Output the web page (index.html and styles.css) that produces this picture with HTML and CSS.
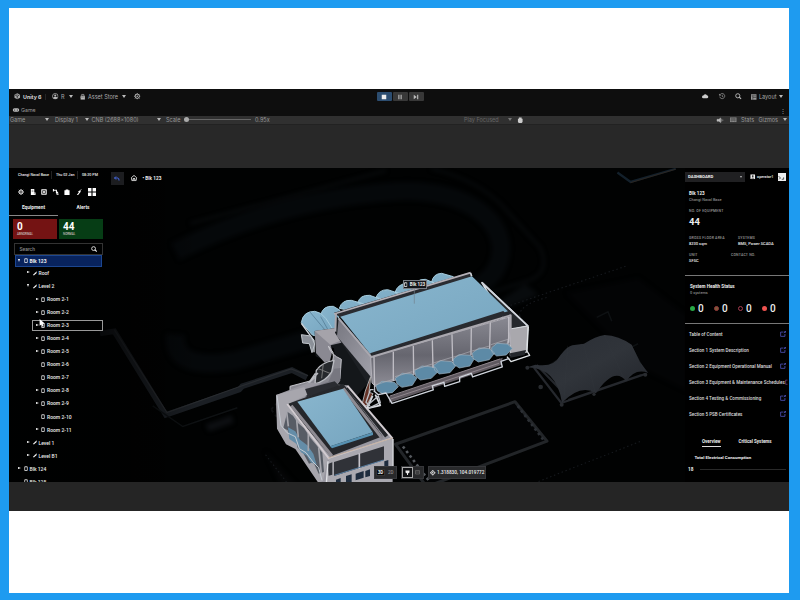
FILE: index.html
```html
<!DOCTYPE html>
<html lang="en">
<head>
<meta charset="utf-8">
<title>Unity 6 - Blk 123</title>
<link rel="stylesheet" href="styles.css">
</head>
<body>
<svg width="0" height="0" class="defs">
  <defs>
    <symbol id="room" viewBox="0 0 10 14"><rect x="1.5" y="2.5" width="7" height="10" fill="none" stroke="currentColor" stroke-width="2"/><path d="M3 1h4M3 13.500h4" stroke="currentColor" stroke-width="1.500"/></symbol>
    <symbol id="level" viewBox="0 0 12 12"><path d="M0 9.500 8 2 11 0l1 1-2 4-6.500 6.500H0z" fill="currentColor"/></symbol>
    <symbol id="gear" viewBox="0 0 14 14"><circle cx="7" cy="7" r="4.600" fill="none" stroke="currentColor" stroke-width="2"/><circle cx="7" cy="7" r="1.700" fill="currentColor"/><path d="M7 0v3M7 11v3M0 7h3M11 7h3M2 2l2 2M10 10l2 2M12 2l-2 2M4 10l-2 2" stroke="currentColor" stroke-width="1.500"/></symbol>
    <symbol id="search" viewBox="0 0 14 14"><circle cx="6" cy="6" r="4.500" fill="none" stroke="currentColor" stroke-width="2"/><path d="m9 9 4.500 4" stroke="currentColor" stroke-width="2.500"/></symbol>
    <symbol id="open" viewBox="0 0 14 14"><path d="M8 2.500H1.500v10h10V7M9 5l4-4M10 1h3v3" fill="none" stroke="currentColor" stroke-width="1.800"/></symbol>
    <symbol id="user" viewBox="0 0 14 14"><circle cx="7" cy="7" r="6" fill="none" stroke="currentColor" stroke-width="1.500"/><circle cx="7" cy="5.200" r="2.200" fill="currentColor"/><path d="M2.500 11c1-4 8-4 9 0-2 2.500-7 2.500-9 0" fill="currentColor"/></symbol>
  </defs>
</svg>
<main class="page">
  <section class="editor">
    <header class="topbar">
      <div class="main-tools">
        <svg class="ico7" viewBox="0 0 14 14"><path d="m7 .5 6 3.300v6.500L7 13.500 1 10.300V3.800z" fill="#aaa"/><path d="M7 7v5M7 7 2.500 4.500M7 7l4.500-2.500" stroke="#111" stroke-width="1.500"/><path d="M4 1.500 7 4l3-2.500" stroke="#333" fill="none"/></svg>
        <b>Unity 6</b><i class="vsep"></i>
        <svg class="ico7"><use href="#user"/></svg><span class="r">R</span><i class="caret"></i>
        <svg class="ico6" viewBox="0 0 12 14"><path d="M1 4h10v9H1z" fill="currentColor"/><path d="M3.500 4V1h5v3M1 8h10" stroke="currentColor" fill="none" stroke-width="1.500"/><path d="M2 7h8" stroke="#222"/></svg>
        <span class="store">Asset Store</span><i class="caret"></i>
        <svg class="ico7"><use href="#gear"/></svg>
      </div>
      <div class="play">
        <span class="on"><svg viewBox="0 0 8 8"><path d="M1 1h6v6H1z" fill="#eee"/></svg></span>
        <span><svg viewBox="0 0 8 8"><path d="M2.500 1v6M5.500 1v6" stroke="#bbb" stroke-width="1.500"/></svg></span>
        <span><svg viewBox="0 0 8 8"><path d="M1 1v6l4-3zM5.500 1H7v6H5.500z" fill="#bbb"/></svg></span>
      </div>
      <div class="right-tools">
        <svg class="ico7" viewBox="0 0 14 14"><path d="M3 11.500a3 3 0 0 1 0-6 4 4 0 0 1 7.500-.5 3.300 3.300 0 0 1 .5 6.500z" fill="#ccc"/></svg>
        <svg class="ico7" viewBox="0 0 14 14"><path d="M2 4a5.500 5.500 0 1 1-.5 4M1 2v3h3M7 4v3.500l2.500 1" fill="none" stroke="#aaa" stroke-width="1.400"/></svg>
        <svg class="ico7"><use href="#search"/></svg>
        <svg class="ico6" viewBox="0 0 12 12"><path d="M0 0h12v12H0z" fill="#999"/><path d="M1 3.500h11M4 3v9M4 7h8" stroke="#222" stroke-width="1.200"/></svg>
        <span>Layout</span><i class="caret"></i>
      </div>
    </header>
    <div class="tabbar">
      <svg viewBox="0 0 14 8"><path d="M3.500 0h7a3 3 0 0 1 0 8h-7a3 3 0 0 1 0-8" fill="#bbb"/><circle cx="4" cy="4" r="1.300"/><circle cx="10" cy="4" r="1.300"/></svg><span>Game</span><i class="more">⋮</i>
    </div>
    <div class="gamebar">
      <span>Game</span><i class="caret"></i><span>Display 1</span><i class="caret"></i><span class="res">CNB (2688x1080)</span><i class="caret"></i><span>Scale</span>
      <span class="slider"></span><span>0.95x</span><span class="focus">Play Focused</span><i class="caret dimmed"></i>
      <svg viewBox="0 0 12 14"><path d="M3 1h6v3h2v7l-2 2H3l-2-2V4h2z" fill="#ccc"/></svg>
      <svg viewBox="0 0 14 10"><path d="M0 3h4l4-3v10L4 7H0zM10 2v6M12.500 3.500v3" fill="#bbb" stroke="#bbb"/></svg>
      <svg viewBox="0 0 14 12"><path d="M0 0h14v10H0z" fill="#888"/><path d="M1 3h12M1 6h12M4 1v8M7 1v6M10 1v8" stroke="#444"/></svg>
      <span>Stats</span><span>Gizmos</span><i class="caret"></i>
    </div>
    <div class="gutter"></div>
    <div class="game">
      <svg class="scene" viewBox="9 168 780 314" preserveAspectRatio="none">
        <defs>
          <linearGradient id="wall" x1="0" y1="0" x2="0" y2="1"><stop offset="0" stop-color="#898992"/><stop offset=".55" stop-color="#66666f"/><stop offset="1" stop-color="#8e8d96"/></linearGradient>
          <linearGradient id="side" x1="0" y1="0" x2="1" y2="1"><stop offset="0" stop-color="#777780"/><stop offset="1" stop-color="#a1a1aa"/></linearGradient>
          <linearGradient id="roof" x1="0" y1="0" x2="1" y2="1"><stop offset="0" stop-color="#89b6ce"/><stop offset="1" stop-color="#76a5bf"/></linearGradient>
          <linearGradient id="tent" x1="0" y1="0" x2="1" y2="1"><stop offset="0" stop-color="#292d34"/><stop offset=".5" stop-color="#30343a"/><stop offset="1" stop-color="#202329"/></linearGradient>
          <linearGradient id="shade"><stop offset=".5" stop-color="#000" stop-opacity=".7"/><stop offset="1" stop-color="#000" stop-opacity="0"/></linearGradient>
          <filter id="soft" x="-10%" y="-10%" width="120%" height="120%" color-interpolation-filters="sRGB"><feGaussianBlur stdDeviation="5"/></filter>
          <filter id="fine" color-interpolation-filters="sRGB"><feGaussianBlur stdDeviation="1.200"/></filter>
        </defs>
        <path d="M9 168h780v314H9z" fill="#010202"/>
        <g transform="translate(100 165) scale(.3763)" fill="none">
          <g filter="url(#soft)">
            <path d="M200 230Q480 90 790 70C990 60 1110 170 1050 280Q1000 360 700 420L360 520Q190 550 200 450" stroke="#05080a" stroke-width="50"/>
            <path d="M240 155 760 15M880 10Q1010 40 1080 120L1170 220Q1200 290 1130 310L1020 345" stroke="#0a0c0e" stroke-width="6"/>
            <path d="M1050 370 1130 315 1165 345 1060 390z" fill="#080b0d"/>
            <path d="M1240 340 1430 300 1560 400V600L1440 540z" fill="#030405"/>
            <path d="M280 690 350 665 355 685 290 708z" fill="#0d0f12"/>
            <path d="M440 760 600 940H520z" fill="#050607"/>
          </g>
          <g filter="url(#fine)">
            <path d="M455 650q40-55 100 0t-70 40z" stroke="#0e1012" stroke-width="5" stroke-dasharray="8 8"/>
            <path d="m0 448 38-6 137 222 195-67 8-9 132-43 40 20" stroke="#1b1f24" stroke-width="15"/>
            <path d="m38 438 140 220 190-68 140-48 45 18" stroke="#292c30" stroke-width="3"/>
            <path d="M1375 20 1410 45 1530 10" stroke="#13202b" stroke-width="6"/><path d="m1410 47 120-36" stroke="#33271e" stroke-width="2"/>
            <path d="m785 742 318-113 85 105-320 121z" fill="#020304" stroke="#222528" stroke-width="8" stroke-linejoin="round"/>
            <path d="m805 748 70 92" stroke="#55595e" stroke-width="7" stroke-dasharray="7 8"/><path d="m1110 640 68 90" stroke="#2b2f34" stroke-width="7" stroke-dasharray="7 8"/>
            <path d="m1070 380 330-112M1155 845l280-110M440 770l130 170M970 930l100-45M1115 400q0-30 80-50M1115 400l30 45" stroke="#15181c" stroke-width="3" stroke-dasharray="4 7"/>
            <path d="m1165 875 60-22M1170 905l110-40M140 640l80 55 145-50M1320 405l30-15 10 25M1400 490l30-15" stroke="#0e1113" stroke-width="4"/>
          </g>
        </g>
        <g transform="translate(500 310) scale(.3333)" filter="url(#fine)">
          <path d="m102 173 82 106 252-87M110 165l90 93M205 270l220-75" stroke="#25282d" stroke-width="7" fill="none"/>
          <path d="m82 172 24-8q55 10 75-28 22-28 36-30l35-5q35-22 62-26 42 2 81 29l25 52 25 33q-40-16-66 25-36-46-91 36-45-30-102 28Q170 174 82 172z" fill="url(#tent)"/>
          <path d="m251 102 35 147M313 75l62 138M392 103l42 78M151 162l94-60M203 107l-10 150" stroke="#373b42" stroke-width="2" fill="none" opacity=".3"/>
          <g fill="#282b2f"><circle cx="82" cy="173" r="6"/><circle cx="185" cy="284" r="6"/><circle cx="436" cy="194" r="6"/><circle cx="122" cy="231" r="7"/><circle cx="282" cy="253" r="5"/></g>
        </g>
        <g transform="translate(290 260) scale(.3333)" stroke-linejoin="round">
          <g fill="url(#roof)" stroke="#a5cbdc" stroke-width="3">
            <path d="M425 66q5-25 30-26l35 10-20 30zM370 82q8-25 36-24l25 10-10 25zM315 98q8-27 37-28l30 16-20 20zM258 113q8-24 35-24l36 12-20 22zM203 128q8-24 36-22l28 10-15 24zM148 145q8-26 36-24l35 10-20 25z"/>
            <path d="M92 165q7-29 38-26l20 12-12 64-20 4z"/><path d="M34 188q5-34 40-34 20 2 34 22l22 34-45 20-18-5z"/>
          </g>
          <path d="m92 170 28 50M60 156l50 60" stroke="#4c748d" stroke-width="2"/>
          <path d="m34 190 38 52v35" stroke="#d3d9df" stroke-width="4" fill="none"/>
          <path d="m34 224 28 4 12 24-8 26-8-27-20-2z" fill="#8b9098" stroke="#bfc4ca" stroke-width="3"/>
          <path d="m74 213 65-9 27 35 80 118-45 50-60-30-9-112-40-16 7 50-22-10z" fill="#14171a"/>
          <path d="m74 213 60-8 5 11 25 5v25l-42 10 5 18-7 28-17 5-25-28z" fill="#8a8992"/>
          <path d="m74 213 63-8 27 32-43 17z" fill="#a5a3aa"/>
          <path d="M115 258q6 25 39 40l-4 57q-8 27-39 37l-65 20-5-24-41 12v-21l64-17 48-37q23-19 17-48z" fill="#898991" stroke="#c5c5cb" stroke-width="3"/>
          <path d="M132 301q-38 6-53 30l-4 40q30-5 50-35zM76 340l-26 38M52 375l32-36" fill="#25282c" stroke="#b9bbc1" stroke-width="4"/>
          <path d="m82 325 38 15M100 310l-5 45" stroke="#777" stroke-width="3"/>
          <path d="M576 68 714 198 659 211z" fill="#25282c" stroke="#d9dde2" stroke-width="5"/>
          <path d="m659 207 55-9-4 79-49 10z" fill="#a9a8ad" stroke="#d6d9dd" stroke-width="3"/>
          <path d="m715 200-4 73 8 13-56 19-12-15" fill="none" stroke="#e1e5e8" stroke-width="4"/>
          <path d="m660 280 48-10-4 15-43 8z" fill="#25282c"/>
          <path d="M136 165 242 280v105L135 218z" fill="#1c1f23"/>
          <path d="m146 174 98 115 2 66-105-126z" fill="url(#side)"/>
          <path d="M242 291 659 171l2 83-405 125-10-10z" fill="url(#wall)" stroke="#b1afb7" stroke-width="3"/>
          <path d="m132 158 410-122 4 15-389 127z" fill="#2a2c31"/>
          <path d="m151 170 395-121 108 105-413 129z" fill="url(#roof)"/>
          <path d="m240 280 400-127 12 13-402 124z" fill="#282a2f"/>
          <path d="m132 162 410-124" fill="none" stroke="#b4b0b7" stroke-width="5"/><path d="m138 160-2 55M146 175l98 116M242 292l420-126v47l-10 43" fill="none" stroke="#aaa8af" stroke-width="6"/>
          <path d="m542 39 3 10M576 68 714 198" stroke="#cfd3da" stroke-width="5"/>
          <path d="m296 410 342-117-4 22-336 113z" fill="#5f5960"/><path d="m300 408 330-111M302 417l325-107" stroke="#8e858c" stroke-width="3"/>
          <g fill="#5d8aa6" stroke="#9cb1bf" stroke-width="2">
            <path d="m258 377 18-13 38 3 11 13-18 18-30 3-15-9zM316 355l21-15 28 2 16 12-14 22-31 6-15-10zM374 332l22-14 40 4 8 13-20 20-33 5-14-12zM431 316l20-14 34 3 12 13-17 20-32 4-14-11zM489 298l18-14 35 2 10 12-12 20-32 6-17-11zM547 279l20-15 31 2 16 13-16 20-33 7-15-10zM605 263l16-13 31 2 15 13-18 20-29 3-14-11z"/>
          </g>
          <g stroke="#bfbdc4" stroke-width="4"><path d="m252 290 2 104M310 275v88M370 258l1 83M427 241l2 82M486 223l2 80M544 205l-1 80M601 188l-2 78M656 170v78"/></g>
          <path d="m255 375 55-17M315 350l52-15M371 330l56-18M430 309l56-17M488 292l55-18M546 273l53-15M603 254l51-16" stroke="#aeadb5" stroke-width="2"/>
          <path d="m251 392 14 12 23-5 18 31 124-40-3-12 35-11 2 12 45-14v-13l35-12 4 11 89-30-4-17 25-9" fill="none" stroke="#cfd4dc" stroke-width="4"/>
          <path d="m226 393 16-43-5 47 12 4-20 38-12-9z" fill="#653327" stroke="#aaa" stroke-width="3"/><path d="m256 404 15 32-40 9 17-37" fill="none" stroke="#dadde2" stroke-width="5"/>
          <path d="M373 83v48" stroke="#71818c" stroke-width="2"/>
        </g>
        <g transform="translate(260 370) scale(.3333)" stroke-linejoin="round">
          <path d="m48 75 98-37 115 8 137 159v110l-30 25H178l-20-58-55-75-27-12-25-52z" fill="#9897a0"/>
          <path d="m134 58 71-23 18-39 18-2v38l-27 35-77 22z" fill="#777780"/>
          <path d="m134 58 6 24 102-30-18-18z" fill="#2a2c31"/>
          <path d="m80 103 170-62 118 158-156 60z" fill="#25272b"/>
          <path d="M48 75 133 51l9 24-60 27 122 165-15 65-13 8-70-103-28-14-27-47z" fill="#a7a6ad"/>
          <path d="m82 125 17 12 14 21 19 17 20 30 17 20 18 23 5 58-16 5-16-35-13 5-22-40-12-7-4-18-18-13-8-22-13-7z" fill="#575c65"/>
          <path d="m84 172 22 12 14 25 22 17 18 25 10 33-18-7-11-20-18-10-14-26-21-14z" fill="#648da8"/>
          <path d="m80 124 5 45M110 150l5 52M145 188v55M176 232l9 90" stroke="#a5a5ac" stroke-width="5"/>
          <path d="m51 77 12 89 18 22 25 12 12 36 20 12 21 28 17 17 10 38" fill="none" stroke="#c4cbd3" stroke-width="3"/>
          <path d="m94 107 122 151M250 55l118 152" stroke="#8e8b92" stroke-width="9"/><path d="m264 51 116 148" stroke="#24262a" stroke-width="12"/>
          <path d="m262 47 136 159M82 102l125 164 191-61" stroke="#d1cbd0" stroke-width="6" fill="none"/>
          <path d="m112 95 137-39 89 131-127 42z" fill="url(#roof)"/><path d="m210 229 129-42v8l-123 40z" fill="#5791b1"/>
          <path d="m207 266 191-61v135H199z" fill="#aaa9b0"/><path d="m222 276 150-47v41l-150 48zM204 282l13-5v37l-11 3z" fill="#303238"/>
          <path d="M298 250v47" stroke="#c7c5cc" stroke-width="5"/>
          <path d="m204 274-5 66M399 207v100" stroke="#e1e2e6" stroke-width="4"/>
          <path d="M205 264 248 250 398 204" stroke="#c3a78d" stroke-width="2" fill="none"/><path d="M223 316 371 270" stroke="#597ea1" stroke-width="3"/>
          <path d="m228 329 14-5v16h-14zM258 318l17-5v27h-17zM287 311l24-8v20l-24 8zM316 303l14-5v20l-14 4zM373 274l12-4v18l-12 6z" fill="#1e2c3e"/>
          <path d="m330 108-12-11 13-38h10M320 108l35-30 6 20-37 18" stroke="#bcc0c7" stroke-width="4" fill="none"/>
        </g>
        <path d="M9 168h190v314H9z" fill="url(#shade)"/>
      </svg>

      <aside class="left">
        <div class="meta"><span>Changi Naval Base</span><span>Thu 02 Jan</span><span>08:20 PM</span></div>
        <div class="filters">
          <svg><use href="#gear"/></svg>
          <svg viewBox="0 0 14 14"><path d="M2 0h8v8h3v6H2z" fill="currentColor"/><path d="M4 3h4M4 6h4M9 11h3" stroke="#222"/></svg>
          <svg viewBox="0 0 14 14"><path d="M1.500 1.500h11v11h-11z" fill="none" stroke="currentColor" stroke-width="2"/><circle cx="7" cy="7" r="2.500" fill="none" stroke="currentColor" stroke-width="2"/><path d="m2 2 10 10M12 2 2 12" stroke="currentColor"/></svg>
          <svg viewBox="0 0 14 14"><path d="M0 3h8v5h4M9 5v8M1 0v6M9 12h4" fill="none" stroke="currentColor" stroke-width="2.500"/></svg>
          <svg viewBox="0 0 14 14"><path d="M1 3h3V1h6v2h3v11H1z" fill="currentColor"/></svg>
          <svg viewBox="0 0 14 14"><path d="m13 0-9 7h3l-5 7h3l7-9H9l4-4z" fill="currentColor"/></svg>
          <svg class="big" viewBox="0 0 14 14"><path d="M0 0h6v6H0zM8 0h6v6H8zM0 8h6v6H0zM8 8h6v6H8z" fill="currentColor"/></svg>
        </div>
        <nav class="tabs"><b class="active">Equipment</b><b>Alerts</b></nav>
        <div class="cards"><div class="card red"><b>0</b><small>ABNORMAL</small></div><div class="card green"><b>44</b><small>NORMAL</small></div></div>
        <div class="searchbox"><span>Search</span><svg><use href="#search"/></svg></div>
        <ul class="tree">
          <li class="l0 selected"><i class="down"></i><svg><use href="#room"/></svg><b>Blk 123</b></li>
          <li class="l1"><i></i><svg><use href="#level"/></svg>Roof</li>
          <li class="l1"><i class="down"></i><svg><use href="#level"/></svg>Level 2</li>
          <li class="l2"><i></i><svg><use href="#room"/></svg>Room 2-1</li>
          <li class="l2"><i></i><svg><use href="#room"/></svg>Room 2-2</li>
          <li class="l2 hover"><i></i><svg><use href="#room"/></svg>Room 2-3<svg class="cursor" viewBox="0 0 10 14"><path d="M1 0v11l3-2 2 4 2-1-2-4h4z" fill="#fff"/></svg></li>
          <li class="l2"><i></i><svg><use href="#room"/></svg>Room 2-4</li>
          <li class="l2"><i></i><svg><use href="#room"/></svg>Room 2-5</li>
          <li class="l2"><i class="none"></i><svg><use href="#room"/></svg>Room 2-6</li>
          <li class="l2"><i class="none"></i><svg><use href="#room"/></svg>Room 2-7</li>
          <li class="l2"><i></i><svg><use href="#room"/></svg>Room 2-8</li>
          <li class="l2"><i></i><svg><use href="#room"/></svg>Room 2-9</li>
          <li class="l2"><i class="none"></i><svg><use href="#room"/></svg>Room 2-10</li>
          <li class="l2"><i></i><svg><use href="#room"/></svg>Room 2-11</li>
          <li class="l1"><i></i><svg><use href="#level"/></svg>Level 1</li>
          <li class="l1"><i></i><svg><use href="#level"/></svg>Level B1</li>
          <li class="l0"><i></i><svg><use href="#room"/></svg>Blk 124</li>
          <li class="l0"><i class="none"></i><svg><use href="#room"/></svg>Blk 125</li>
        </ul>
      </aside>

      <div class="viewport">
        <div class="crumbs">
          <span class="back"><svg viewBox="0 0 12 10"><path d="M4 1 1 4l3 3M1 4h7q2 0 2 5" fill="none" stroke="#4468e0" stroke-width="2"/></svg></span>
          <svg class="home" viewBox="0 0 14 14"><path d="m1 6 6-5 6 5-1 7H2zM4 10q3-6 6 0z" fill="none" stroke="#eee" stroke-width="1.900"/></svg>
          <b>• Blk 123</b>
        </div>
        <div class="marker"><svg><use href="#room"/></svg><b>Blk 123</b></div>
        <div class="controls">
          <div class="chip dims"><b class="boxed">3D</b><span>2D</span></div>
          <div class="chip modes"><span class="boxed"><svg viewBox="0 0 10 10"><path d="M1 1h8v4L6 7v3H4V7L1 5z" fill="#eee"/></svg></span><span><svg viewBox="0 0 10 10"><path d="M1 1h8v7H1zM1 4h8" stroke="#666" stroke-width="1.500" fill="none"/></svg></span></div>
          <div class="chip coords"><svg viewBox="0 0 14 14"><circle cx="7" cy="7" r="4.500" fill="none" stroke="#eee" stroke-width="2"/><circle cx="7" cy="7" r="1.800" fill="#eee"/><path d="M7 0v3M7 11v3M0 7h3M11 7h3" stroke="#eee" stroke-width="2"/></svg><span>1.318830, 104.019772</span></div>
        </div>
      </div>

      <aside class="right">
        <div class="account"><div class="select"><b>DASHBOARD</b><i class="caret"></i></div><svg viewBox="0 0 12 12"><path d="M1 1h10v10H1z" fill="#eee"/><circle cx="6" cy="4.500" r="2" fill="#222"/><path d="M2.500 10q3.500-5 7 0" fill="#222"/></svg><span>operator1</span><span class="logo"><svg viewBox="0 0 12 12"><path d="m1 5 3 3-2 2M6 10h3M9 7v3" stroke="#333" fill="none" stroke-width="1.300"/></svg></span></div>
        <section class="summary">
          <b class="name">Blk 123</b><span class="dim">Changi Naval Base</span>
          <label>NO. OF EQUIPMENT</label><b class="count">44</b>
          <div class="facts"><div><label>GROSS FLOOR AREA</label><span>8230 sqm</span></div><div><label>SYSTEMS</label><span>BMS, Power SCADA</span></div></div>
          <div class="facts second"><div><label>UNIT</label><span>SFSC</span></div><div><label>CONTACT NO.</label></div></div>
        </section>
        <section class="health">
          <b class="name">System Health Status</b><span class="dim">0 systems</span>
          <div class="dots"><i class="g"></i><b>0</b><i class="o"></i><b>0</b><i class="h"></i><b>0</b><i class="rd"></i><b>0</b></div>
        </section>
        <ul class="docs">
          <li><span>Table of Content</span><svg><use href="#open"/></svg></li>
          <li><span>Section 1 System Description</span><svg><use href="#open"/></svg></li>
          <li><span>Section 2 Equipment Operational Manual</span><svg><use href="#open"/></svg></li>
          <li class="cut"><span>Section 3 Equipment &amp; Maintenance Schedules</span><svg viewBox="0 0 6 14"><path d="M6 2.500H1.500v10H6" fill="none" stroke="currentColor" stroke-width="1.800"/></svg></li>
          <li><span>Section 4 Testing &amp; Commissioning</span><svg><use href="#open"/></svg></li>
          <li><span>Section 5 PSB Certificates</span><svg><use href="#open"/></svg></li>
        </ul>
        <nav class="views"><b class="active">Overview</b><b>Critical Systems</b></nav>
        <b class="chart-title">Total Electrical Consumption</b>
        <div class="axis"><b>18</b><i></i></div>
      </aside>
    </div>
    <div class="footer"></div>
  </section>
</main>
</body>
</html>
```

FILE: styles.css
```css
* { box-sizing: border-box; }
body { margin: 0; width: 800px; height: 600px; overflow: hidden; background: #1e9bf0; font-family: Inter, sans-serif; font-size: 6px; color: #aaa; }
.defs { display: block; position: absolute; }
.page { height: 600px; padding: 8px 11px 7px 9px; background: linear-gradient(#fff, #fff) content-box, #1e9bf0; }
.editor { padding-top: 81px; width: 780px; }
svg { display: block; overflow: visible; flex: none; }
ul { list-style: none; margin: 0; padding: 0; }
span, b, label { white-space: nowrap; }
i { font-style: normal; }

.topbar { display: grid; grid-template-columns: 368px 300px 112px; height: 15px; align-items: center; background: #0e0e0e; }
.main-tools { display: grid; grid-template-columns: 9px 22px 7px 9px 7.500px 11px 8.500px 34px 12px 8px; padding-left: 5px; align-items: center; }
.main-tools b { color: #d5d5d5; font-size: 5.300px; }
.ico7 { width: 6.500px; height: 6.500px; color: #bbb; }
.ico6 { width: 5.500px; height: 6px; color: #bbb; }
.r { font-size: 5.500px; }
.store { font-size: 5.500px; }
.vsep { width: 1px; height: 6px; background: #252525; }
.caret { width: 0; height: 0; border: 2px solid transparent; border-top: 3px solid #bbb; border-bottom: 0; }
.caret.dimmed { border-top-color: #777; }
.play { display: flex; gap: 1.300px; }
.play span { display: grid; place-items: center; width: 14.700px; height: 9px; background: #383838; border-radius: 1px; }
.play .on { background: #2c4d70; }
.play svg { width: 6px; height: 6px; }
.right-tools { display: grid; grid-template-columns: 17px 16px 16px 8px 20px 5px; padding-left: 25px; align-items: center; }
.right-tools span { font-size: 5.500px; }

.tabbar { display: flex; align-items: center; height: 11.500px; padding: 1px 3px 0 4px; background: #0e0e0e; gap: 2px; }
.tabbar svg { width: 6px; height: 4px; }
.tabbar span { font-size: 5.300px; color: #999; }
.more { margin-left: auto; font-size: 6px; }
.gamebar { display: grid; height: 9.500px; grid-template-columns: 35px 10px 29.500px 7px 65.500px 9px 18px 71px 209px 43.500px 9px 200px 13px 11.500px 17.500px 24px 5px; padding-left: 1px; align-items: center; background: #303030; font-size: 5.500px; border-bottom: 1px solid #222; color: #999; white-space: nowrap; }
.gamebar svg { width: 6.500px; height: 6.500px; }
.gamebar .focus { color: #666; }
.slider { height: 1px; width: 67px; background: #666; }
.slider::before { content: ""; display: block; width: 5px; height: 5px; margin-top: -2px; border-radius: 50%; background: #aaa; }
.gutter { height: 43px; background: #282828; }
.footer { height: 29px; background: #252525; }

.game { position: relative; display: grid; grid-template-columns: 94px 582px 104px; height: 314px; overflow: hidden; background: #000; font-family: Roboto, sans-serif; font-weight: 500; color: #eee; }
.scene { position: absolute; inset: 0; width: 780px; height: 314px; }
.left, .right, .viewport { position: relative; min-width: 0; height: 314px; }
.left { overflow: hidden; }

.meta { display: grid; grid-template-columns: 38px 26px 20px; padding-left: 9px; height: 14px; align-items: center; font-size: 3.700px; }
.meta span { height: 8px; line-height: 8px; }
.meta span + span { border-left: 1px solid #222; padding-left: 4px; margin-left: -5px; }
.filters { display: flex; height: 19px; align-items: center; padding-left: 9px; gap: 5.600px; color: #fff; }
.filters svg { width: 6px; height: 6px; }
.filters .big { width: 8px; height: 8px; }
.tabs { display: grid; grid-template-columns: 49px 50px; height: 14px; text-align: center; line-height: 14px; font-size: 4.800px; }
.tabs .active { border-bottom: 1px solid #888; }
.cards { display: grid; grid-template-columns: 44px 44px; gap: 2px; padding: 4px 0 0 4px; }
.card { height: 19.500px; padding: 2px 0 0 4px; }
.card b { display: block; height: 11px; font-size: 10px; line-height: 11px; color: #fff; }
.card small { display: block; font-size: 3px; line-height: 4px; color: #c8bcbc; }
.red { background: #741313; }
.green { background: #063d15; }
.searchbox { display: flex; align-items: center; justify-content: space-between; height: 12px; margin: 4px 0 0 4.500px; padding: 0 5px; border: 1px solid #333; font-size: 5px; color: #888; }
.searchbox svg { width: 6px; height: 6px; color: #eee; }
.tree { font-size: 5px; margin: .5px 0 0 6px; }
.tree li { position: relative; display: flex; align-items: center; height: 13.060px; white-space: nowrap; }
.tree li > i { width: 5.500px; height: 3.200px; flex: none; }
.tree i::before { content: ""; display: block; width: 0; height: 0; border: 1.600px solid transparent; border-left: 3px solid #fff; border-right: 0; }
.tree .down::before { border: 1.600px solid transparent; border-top: 3px solid #fff; border-bottom: 0; }
.tree .none::before { display: none; }
.tree li > svg { width: 4px; height: 5px; margin-right: 2px; }
.l0 { padding-left: 3px; }
.l1 { padding-left: 12px; }
.l2 { padding-left: 20.500px; }
.tree .selected { height: 11.500px; margin: 0 1px 0 0; background: #08235d; border: 1px solid #1c4690; padding-left: 2px; }
.tree .hover::before { content: ""; position: absolute; inset: 1px 0 1px 17px; border: 1px solid #999; }
.tree li > .cursor { position: absolute; left: 24px; top: 0; width: 6px; height: 8.500px; margin: 0; }

.crumbs { display: grid; grid-template-columns: 20px 12px 40px; align-items: center; padding: 3.500px 0 0 7.500px; }
.crumbs b { font-size: 4.700px; }
.back { display: grid; place-items: center; width: 13.500px; height: 13.500px; background: #1c1d20; }
.back svg { width: 6px; height: 5px; }
.home { width: 6px; height: 6px; }
.marker { position: absolute; left: 393.500px; top: 111.500px; display: flex; align-items: center; justify-content: center; gap: 2px; width: 24.500px; height: 9px; margin-left: -94px; border: 1px solid #777c84; background: #14161b; }
.marker svg { width: 3.500px; height: 5px; }
.marker b { font-size: 4.500px; }
.controls { position: absolute; left: 271px; top: 298px; display: flex; gap: 3.500px; font-size: 4.600px; }
.chip { display: flex; align-items: center; height: 12.500px; background: #28292b; border: 1px solid #36373a; }
.dims { width: 23px; padding: 1px; }
.dims span { margin-left: 3px; color: #888; }
.boxed { display: grid; place-items: center; width: 11px; height: 10.500px; border: 1px solid #aaa; background: #101113; flex: none; }
.dims .boxed { width: 9px; height: 7px; border-color: #333; background: #080808; font-size: 4.500px; line-height: 5px; }
.modes { width: 23.500px; justify-content: space-between; padding-right: 3px; }
.modes svg { width: 5px; height: 5px; }
.coords { width: 58px; gap: 2px; padding-left: 1px; }
.coords svg { width: 5.500px; height: 5.500px; }
.coords span { font-size: 4.700px; }

.right { background: #000; font-size: 4.700px; }
.account { display: grid; grid-template-columns: 65px 7px 21px 9px; height: 17.500px; align-items: center; }
.select { display: flex; align-items: center; justify-content: space-between; width: 60px; height: 10px; padding: 0 3px; background: #202022; }
.select b { font-size: 4.300px; }
.select .caret { border-width: 1.500px; border-top-width: 2px; }
.account > svg { width: 5.500px; height: 5.500px; }
.account > span { font-size: 3.800px; }
.logo { width: 7.500px; height: 7.500px; background: #eee; }
.summary { height: 90px; padding: 4px 0 0 4px; border-bottom: 1.500px solid #777; }
.summary .name, .health .name { display: block; font-size: 4.600px; line-height: 7px; }
.dim { display: block; font-size: 3.900px; line-height: 6px; color: #888; }
label { display: block; font-size: 3.500px; line-height: 5px; color: #999; letter-spacing: .2px; }
.summary > label { margin-top: 6.500px; }
.count { display: block; font-size: 9.500px; line-height: 11px; margin-top: 1.500px; }
.facts { display: grid; grid-template-columns: 49px 50px; height: 17.500px; margin-top: 9px; font-size: 4px; }
.facts span { display: block; line-height: 6px; }
.facts.second { grid-template-columns: 42px 50px; margin-top: 0; }
.health { height: 48px; padding: 7px 0 0 5px; border-bottom: 1.500px solid #777; }
.dots { display: grid; grid-template-columns: 8px 16px 8px 16px 8px 16px 8px 16px; align-items: center; margin-top: 7px; }
.dots b { font-size: 10px; line-height: 12px; font-weight: 500; }
.dots i { width: 5px; height: 5px; border-radius: 50%; background: #28a745; }
.dots .o { background: #7d5a3b; border: 1px solid #983b3b; }
.dots .h { background: none; border: 1px solid #a63c50; }
.dots .rd { background: #ef5350; }
.docs { padding: 2.500px 3px 0 4px; font-size: 4.550px; }
.docs li { display: flex; justify-content: space-between; align-items: center; height: 16px; color: #ddd; }
.docs svg { width: 6px; height: 6px; color: #5557c4; }
.docs .cut svg { width: 2.500px; color: #71407a; }
.views { display: grid; grid-template-columns: 19px auto; gap: 17.500px; padding: 16px 0 0 17px; font-size: 4.500px; line-height: 7.500px; }
.views .active { border-bottom: 1px solid #ddd; }
.chart-title { display: block; padding: 7.500px 0 0 9.500px; font-size: 4.400px; line-height: 7px; }
.axis { display: grid; grid-template-columns: 12px 86px; align-items: center; padding: 5px 0 0 3px; line-height: 7px; }
.axis i { height: 1px; background: #292929; }
```
